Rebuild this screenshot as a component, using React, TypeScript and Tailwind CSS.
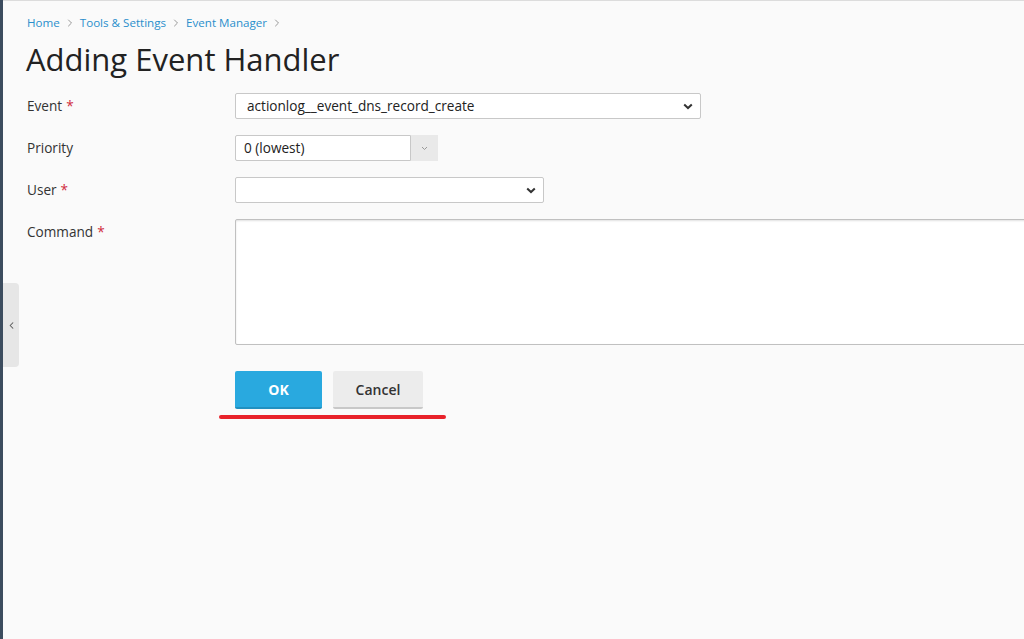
import { ChevronRight, ChevronLeft } from 'lucide-react';

const FONT = { fontFamily: '"Open Sans", "Noto Sans", sans-serif' };

function Chevron({ className = '' }: { className?: string }) {
  return (
    <svg width="10" height="7" viewBox="0 0 10 7" className={className}>
      <path d="M1.2 1.4 L5 5 L8.8 1.4" fill="none" stroke="currentColor" strokeWidth="2" />
    </svg>
  );
}

function Label({ text, required }: { text: string; required?: boolean }) {
  return (
    <div className="h-[26px] leading-[26px] text-[13.6px] text-[#333]">
      {text}
      {required && <span className="text-[#d02a3d] ml-[4px]">*</span>}
    </div>
  );
}

export default function App() {
  return (
    <div className="w-[1024px] h-[639px] overflow-hidden bg-[#fafafa] flex relative" style={FONT}>
      <div className="w-[3px] h-full bg-[#3c4c5e] shrink-0" />
      <div className="absolute left-[3px] top-[283px] w-[16px] h-[84px] bg-[#e6e6e6] rounded-r-[4px] flex items-center justify-center">
        <ChevronLeft size={11} strokeWidth={2.2} className="text-[#555]" />
      </div>
      <div className="flex-1 border-t border-[#dcdcdc] pl-[24px] pt-[14px]">
        <nav className="flex items-center text-[11.6px] leading-[16px] text-[#2a8fcc]">
          <span>Home</span>
          <ChevronRight size={12} className="text-[#999] mx-[4px]" />
          <span>Tools &amp; Settings</span>
          <ChevronRight size={12} className="text-[#999] mx-[4px]" />
          <span>Event Manager</span>
          <ChevronRight size={12} className="text-[#999] mx-[4px]" />
        </nav>
        <h1 className="text-[31px] leading-[40px] text-[#222] mt-[8px] -ml-[1px]">Adding Event Handler</h1>

        <div className="mt-[14px] grid grid-cols-[208px_1fr] gap-y-[16px]">
          <Label text="Event" required />
          <div className="w-[466px] h-[26px] bg-white border border-[#c8c8c8] rounded-[2px] flex items-center justify-between pl-[11px] pr-[7px] text-[13.6px] text-[#222]">
            <span>actionlog__event_dns_record_create</span>
            <Chevron className="text-[#333]" />
          </div>

          <Label text="Priority" />
          <div className="flex">
            <div className="w-[176px] h-[26px] bg-white border border-[#c8c8c8] rounded-l-[2px] flex items-center pl-[8px] text-[13.6px] text-[#222]">
              0 (lowest)
            </div>
            <div className="w-[27px] h-[26px] bg-[#e9e9e9] flex items-center justify-center">
              <svg width="7" height="5" viewBox="0 0 7 5">
                <path d="M1 1 L3.5 3.5 L6 1" fill="none" stroke="#999" strokeWidth="1" />
              </svg>
            </div>
          </div>

          <Label text="User" required />
          <div className="w-[309px] h-[26px] bg-white border border-[#c8c8c8] rounded-[2px] flex items-center justify-end pr-[7px]">
            <Chevron className="text-[#333]" />
          </div>

          <Label text="Command" required />
          <div className="w-[820px] h-[126px] bg-white border border-[#c0c0c0] rounded-[2px] shadow-[inset_0_1px_2px_rgba(0,0,0,0.12)]" />
        </div>

        <div className="ml-[208px] mt-[26px] flex gap-[11px]">
          <button className="w-[87px] h-[38px] bg-[#29a9df] border-b-2 border-[#2190c0] rounded-[2px] text-white text-[14px] font-bold">
            OK
          </button>
          <button className="w-[90px] h-[38px] bg-[#ececec] border-b-2 border-[#c8c8c8] rounded-[2px] text-[#333] text-[14px] font-semibold">
            Cancel
          </button>
        </div>
        <div className="ml-[192px] mt-[6px] w-[227px] h-[4px] rounded-full bg-[#e8222a]" />
      </div>
    </div>
  );
}
